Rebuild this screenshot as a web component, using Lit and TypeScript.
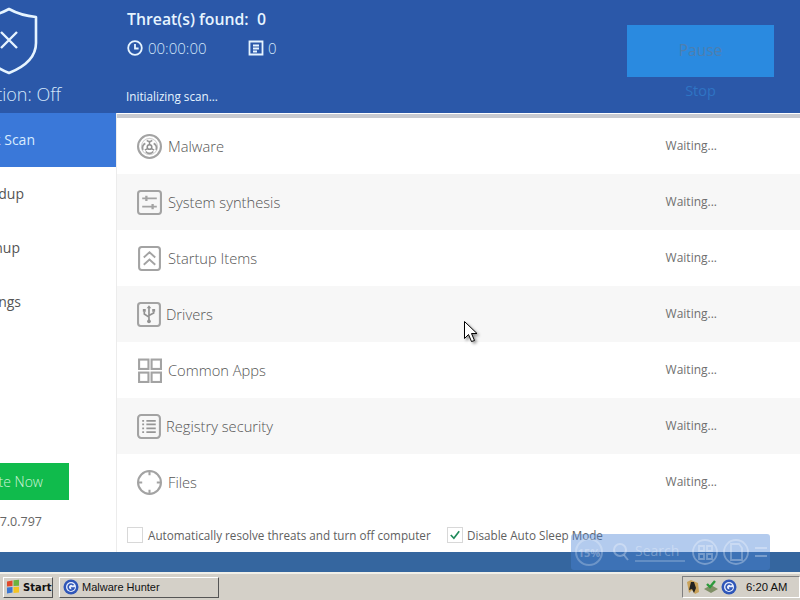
import { LitElement, html, css, svg } from "lit";
import { customElement } from "lit/decorators.js";

const g = (c: unknown) => html`<svg class="ico" viewBox="0 0 24 24" fill="none" stroke="#a3a3a3" stroke-width="2">${c}</svg>`;

const icons = {
  bio: g(svg`<circle cx="12" cy="12" r="11"/><circle cx="12" cy="12" r="7.8" stroke-width="1" stroke="#cfcfcf"/>
    <path stroke-width="1.6" stroke="#9a9a9a" d="M9.4 6.2a4 4 0 0 0 5.200 0M5.800 15.200a4.500 4.500 0 0 1 2.200-6.200M18.200 15.200a4.500 4.500 0 0 0-2.200-6.200M8.400 16.800a4.500 4.500 0 0 0 7.200 0"/>
    <circle cx="12" cy="12.500" r="2.200" stroke-width="1.500" stroke="#8f8f8f"/><path stroke-width="1.400" stroke="#8f8f8f" d="M12 7v3.500M7.500 15.500l3-1.700M16.500 15.500l-3-1.700"/>`),
  sliders: g(svg`<rect x="1" y="1" width="22" height="22" rx="2.5"/><path stroke-width="1.7" d="M5 8h14M5 16h14"/><path stroke-width="2.2" d="M9 5.500v5M15 13.500v5"/>`),
  chev: g(svg`<rect x="2" y="1" width="20" height="22" rx="2.5"/><path stroke-width="1.8" d="M6.500 11 12 6l5.500 5M6.500 18 12 13l5.500 5"/>`),
  usb: g(svg`<rect x="1" y="1" width="21" height="22" rx="2.5"/><path stroke-width="1.600" stroke="#929292" d="M11.500 5v13M7 9v2.500l4.500 3M16 9v1.500l-4.500 2.500"/><path fill="#929292" stroke="none" d="M11.500 3l2.200 3h-4.400zM5.600 6.800h2.800v2.600H5.600zM14.600 6.800h2.800v2.600h-2.800z"/><circle cx="11.500" cy="18.500" r="1.800" fill="#929292" stroke="none"/>`),
  apps: g(svg`<rect x="2" y="1.500" width="9" height="9"/><rect x="14" y="1.500" width="9" height="9"/><rect x="2" y="14" width="9" height="9"/><rect x="14" y="14" width="9" height="9"/>`),
  list: g(svg`<rect x="1" y="1" width="21" height="22" rx="3"/><path stroke-width="1.700" stroke="#969696" d="M5 6.500h1.800M9 6.500h9M5 10h1.800M9 10h9M5 13.800h1.800M9 13.800h9M5 17.500h1.800M9 17.500h9"/>`),
  target: g(svg`<circle cx="12" cy="12" r="11"/><path d="M12 1v4M12 19v4M1 12h4M19 12h4"/>`),
};

const rows = [
  { icon: icons.bio, label: "Malware", tight: false },
  { icon: icons.sliders, label: "System synthesis", tight: false },
  { icon: icons.chev, label: "Startup Items", tight: false },
  { icon: icons.usb, label: "Drivers", tight: true },
  { icon: icons.apps, label: "Common Apps", tight: false },
  { icon: icons.list, label: "Registry security", tight: true },
  { icon: icons.target, label: "Files", tight: false },
];

const gi = svg`<circle cx="8" cy="8" r="7.500" fill="#2f56b8"/><circle cx="8" cy="8" r="5" fill="#e8eefc"/><path d="M10.500 6.200A3 3 0 1 0 11 9H8" fill="none" stroke="#2f56b8" stroke-width="1.600"/>`;

@customElement("app-root")
export class AppRoot extends LitElement {
  static styles = css`
    :host { display: block; position: relative; width: 800px; height: 600px; overflow: hidden;
      font-family: "Open Sans", "Liberation Sans", sans-serif; background: #d4d0c8; }
    .window { height: 572px; display: flex; flex-direction: column; background: #fff; }
    .header { height: 113px; flex: none; background: #2b58a9; display: flex; color: #e6f4ff; }
    .prot { width: 117px; flex: none; display: flex; flex-direction: column; align-items: flex-end; overflow: hidden; }
    .shield { width: 58px; height: 68px; margin: 7px 79px 0 0; flex: none; }
    .prot-text { font-size: 18px; line-height: 22px; margin: 8px 56px 0 0; white-space: nowrap; color: #d5e8fb; font-weight: 300; }
    .info { flex: 1; padding: 9px 0 0 10px; }
    .threat { font-size: 15.8px; line-height: 20px; font-weight: 600; white-space: pre; color: #e6f4ff; }
    .meta { display: flex; align-items: center; margin-top: 10px; height: 18px; font-size: 15px; font-weight: 300; color: #d5e8fb; }
    .meta svg { width: 16px; height: 16px; flex: none; }
    .time { margin-left: 5px; width: 100px; }
    .count { margin-left: 4px; }
    .status { margin-top: 30px; margin-left: -1px; font-size: 11.7px; line-height: 18px; color: #e6f4ff; }
    .actions { width: 173px; flex: none; display: flex; flex-direction: column; padding-top: 25px; }
    .pause { width: 147px; height: 52px; padding-bottom: 2px; box-sizing: border-box; background: #2a8ae0; color: #4d7fb0; font-size: 15.5px;
      display: flex; align-items: center; justify-content: center; }
    .stop { width: 147px; margin-top: 4px; text-align: center; color: #2f74c4; font-size: 14.5px; line-height: 20px; }
    .main { height: 439px; flex: none; display: flex; }
    .side { width: 117px; flex: none; display: flex; flex-direction: column; overflow: hidden; border-right: 1px solid #ececec; box-sizing: border-box; }
    .nav { height: 54px; flex: none; display: flex; align-items: center; justify-content: flex-end; font-size: 14px; color: #555; white-space: nowrap; padding-bottom: 2px; box-sizing: border-box; }
    .nav.active { background: #3a78d9; color: #d8ecff; }
    .e35 { padding-right: 81px; } .e24 { padding-right: 92px; } .e20 { padding-right: 96px; } .e21 { padding-right: 95px; }
    .activate { margin-top: 134px; width: 69px; height: 37px; flex: none; background: #10bb4c; color: #cdf3d8; font-size: 14px; font-weight: 300;
      display: flex; align-items: center; justify-content: flex-end; overflow: hidden; white-space: nowrap; padding-right: 26px; box-sizing: border-box; }
    .ver { margin-top: 13px; width: 42px; font-size: 12.5px; line-height: 18px; color: #666; display: flex; justify-content: flex-end; white-space: nowrap; overflow: hidden; }
    .content { flex: 1; display: flex; flex-direction: column; border-top: 4px solid #c8cad0; margin-top: 1px; }
    .row { height: 56px; flex: none; display: flex; align-items: center; padding-left: 20px; padding-right: 83px; font-size: 14.7px; font-weight: 300; color: #555; }
    .row:nth-child(even) { background: #f7f7f7; }
    .ico { width: 25px; height: 25px; flex: none; }
    .label { margin-left: 6px; flex: 1; }
    .tight .label { margin-left: 4px; }
    .wait { font-size: 12px; font-weight: 400; color: #6f6f6f; padding-bottom: 2px; }
    .opts { display: flex; align-items: center; height: 20px; margin-top: 15px; padding-left: 10px; font-size: 11.7px; color: #5f5f5f; white-space: nowrap; }
    .box { width: 16px; height: 16px; box-sizing: border-box; flex: none; border: 1px solid #d8d8d8; margin-right: 5px; display: flex; }
    .box.on { margin-right: 4px; }
    .box svg { width: 14px; height: 14px; }
    .opt1 { width: 299px; }
    .foot { flex: 1; background: #35669f; }
    .edge { height: 2px; background: #f0efe9; }
    .task { height: 26px; display: flex; align-items: center; padding-left: 3px; font-family: "DejaVu Sans", sans-serif; font-size: 11px; color: #111; }
    .btn { height: 21px; box-sizing: border-box; border: 1px solid; border-color: #fff #555 #555 #fff; display: flex; align-items: center; }
    .start { width: 50px; font-weight: 700; font-size: 10px; padding-left: 1px; }
    .start svg { width: 16px; height: 16px; margin-right: 2px; }
    .appbtn { width: 160px; margin-left: 6px; padding-left: 3px; font-family: "Liberation Sans", sans-serif; font-size: 11px; }
    .appbtn svg { width: 16px; height: 16px; margin-right: 3px; }
    .tray { margin-left: auto; width: 118px; height: 22px; box-sizing: border-box; border: 1px solid; border-color: #808080 #fff #fff #808080;
      display: flex; align-items: center; padding-left: 2px; font-family: "Liberation Sans", sans-serif; font-size: 11.3px; }
    .tray svg { width: 16px; height: 16px; margin-right: 2px; flex: none; }
    .clock { margin-left: 7px; }
    .widget { position: absolute; left: 571px; top: 534px; width: 199px; height: 36px; background: rgba(74, 130, 214, .42); border-radius: 3px;
      display: flex; align-items: center; color: rgba(255,255,255,.3); font-size: 14px; padding-left: 4px; box-sizing: border-box; }
    .pct { width: 28px; height: 28px; box-sizing: border-box; border: 2px solid rgba(255,255,255,.25); border-radius: 50%; font-size: 11px; font-weight: 700;
      display: flex; align-items: center; justify-content: center; flex: none; }
    .widget svg { flex: none; }
    .find { margin-left: 10px; }
    .search { margin-left: 6px; width: 60px; border-bottom: 2px solid rgba(255,255,255,.2); line-height: 18px; }
    .w-icons { margin-left: 5px; }
    .cursor { position: absolute; left: 464px; top: 321px; width: 14px; height: 22px; filter: drop-shadow(2px 2px 1.5px rgba(0,0,0,.4)); }
  `;

  render() {
    return html`
      <div class="window">
        <div class="header">
          <div class="prot">
            <svg class="shield" viewBox="0 0 58 68" fill="none" stroke="#e6f4ff" stroke-width="2.600" stroke-linejoin="round">
              <path d="M29 2 C38 7 46 9 56 10 V36 C56 50 44 60 29 66 C14 60 2 50 2 36 V10 C12 9 20 7 29 2Z"/>
              <path d="M21 25 37 41M37 25 21 41" stroke-width="2.400"/>
            </svg>
            <div class="prot-text">Protection: Off</div>
          </div>
          <div class="info">
            <div class="threat">Threat(s) found:  0</div>
            <div class="meta">
              <svg viewBox="0 0 16 16" fill="none" stroke="#e6f4ff" stroke-width="1.800"><circle cx="8" cy="8" r="6.800"/><path d="M8 4v4.500h3.600"/></svg>
              <span class="time">00:00:00</span>
              <svg viewBox="0 0 16 16" fill="none" stroke="#e6f4ff" stroke-width="1.800"><path d="M1.500 1.500h13v13h-13z"/><path d="M5 5.500h6M5 8.500h6M5 11.500h4"/></svg>
              <span class="count">0</span>
            </div>
            <div class="status">Initializing scan...</div>
          </div>
          <div class="actions">
            <div class="pause">Pause</div>
            <div class="stop">Stop</div>
          </div>
        </div>
        <div class="main">
          <div class="side">
            <div class="nav active e35">Quick Scan</div>
            <div class="nav e24">Speedup</div>
            <div class="nav e20">Cleanup</div>
            <div class="nav e21">Settings</div>
            <div class="activate">Activate Now</div>
            <div class="ver">Version 7.0.797</div>
          </div>
          <div class="content">
            ${rows.map(r => html`
              <div class="row ${r.tight ? "tight" : ""}">
                ${r.icon}
                <span class="label">${r.label}</span>
                <span class="wait">Waiting...</span>
              </div>`)}
            <div class="opts">
              <span class="box"></span><span class="opt1">Automatically resolve threats and turn off computer</span>
              <span class="box on"><svg viewBox="0 0 15 15" fill="none" stroke="#1f8a5a" stroke-width="1.800"><path d="M3 7.500 6.300 11 12 3.500"/></svg></span><span>Disable Auto Sleep Mode</span>
            </div>
          </div>
        </div>
        <div class="foot"></div>
      </div>
      <div class="edge"></div>
      <div class="task">
        <div class="btn start">
          <svg viewBox="0 0 16 16"><path fill="#e0492b" d="M2 2.500 7.500 1.500V7L2 7.500z"/><path fill="#6cb33f" d="M8.500 1.300 14 .8v6L8.500 7z"/><path fill="#3a76d2" d="M2 8.500 7.500 8v5.500L2 14.500z"/><path fill="#f3c322" d="M8.500 8 14 7.800v5.700l-5.500.5z"/></svg>
          Start
        </div>
        <div class="btn appbtn"><svg viewBox="0 0 16 16">${gi}</svg>Malware Hunter</div>
        <div class="tray">
          <svg viewBox="0 0 16 16"><path fill="#c9a25a" d="M2 3l4-2 7 3 1 9-4 2-3-4-3 3z"/><path fill="#222" d="M6 3h3l2 6-2 5-2-4-3 1z"/></svg>
          <svg viewBox="0 0 16 16"><path fill="#7f8f66" d="M1 10l7-4 7 4-7 4z"/><path fill="none" stroke="#2c9a3b" stroke-width="2.400" d="M4 5l3 3 5-6"/></svg>
          <svg viewBox="0 0 16 16">${gi}</svg>
          <span class="clock">6:20 AM</span>
        </div>
      </div>
      <div class="widget">
        <span class="pct">15%</span>
        <svg class="find" width="16" height="18" viewBox="0 0 16 18" fill="none" stroke="rgba(255,255,255,.3)" stroke-width="2"><circle cx="7" cy="7" r="6"/><path d="M11 12l4 5"/></svg>
        <span class="search">Search</span>
        <svg class="w-icons" width="80" height="32" viewBox="0 0 80 32" fill="none" stroke="rgba(255,255,255,.3)" stroke-width="1.800">
          <circle cx="15" cy="16" r="12"/><path d="M9 10h5v5H9zM17 10h5v5h-5zM9 18h5v5H9zM17 18h5v5h-5z"/>
          <circle cx="46" cy="16" r="12"/><path d="M41 8h8l3 4v12H41z"/><path d="M65 12h12M65 20h12"/>
        </svg>
      </div>
      <svg class="cursor" viewBox="0 0 14 22"><path d="M.5.5v17l4-4 3 7 3-1-3-7h5.500z" fill="#fff" stroke="#000"/></svg>
    `;
  }
}
